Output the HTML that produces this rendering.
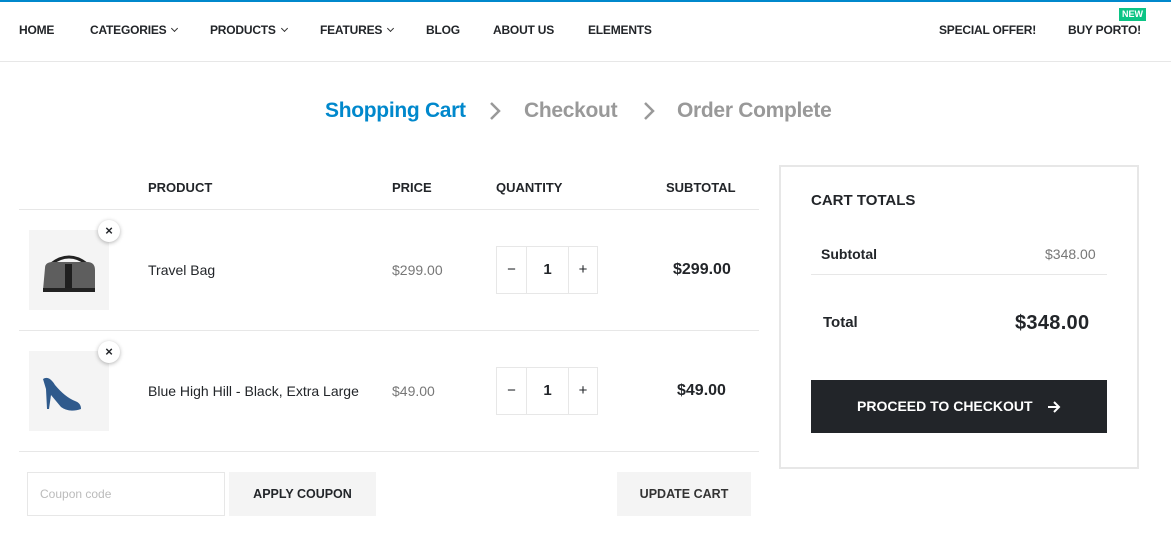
<!DOCTYPE html>
<html><head><meta charset="utf-8"><style>
*{margin:0;padding:0;box-sizing:border-box}
body{width:1171px;height:533px;overflow:hidden;background:#fff;font-family:"Liberation Sans",sans-serif;color:#222529;position:relative}
.a{position:absolute;white-space:nowrap}
.nav{font-size:12px;font-weight:bold;top:23px;color:#222529;letter-spacing:-0.2px}
.chev{display:inline-block;width:5px;height:5px;border-right:1px solid #333;border-bottom:1px solid #333;transform:rotate(45deg);margin-left:6px;position:relative;top:-3px}
.step{font-size:21px;font-weight:bold;top:99px;letter-spacing:-0.3px}
.hd{font-size:13px;font-weight:bold;top:180px}
.line{position:absolute;left:19px;width:740px;height:1px;background:#e7e7e7}
.img{position:absolute;left:29px;width:80px;height:80px;background:#f4f4f4}
.x{position:absolute;left:98px;width:22px;height:22px;border-radius:50%;background:#fff;box-shadow:0 1px 4px rgba(0,0,0,.3);font-size:13px;font-weight:bold;text-align:center;line-height:22px}
.qty{position:absolute;left:496px;width:102px;height:48px;border:1px solid #e7e7e7;display:flex}
.qty div{border-right:1px solid #e7e7e7;text-align:center;line-height:46px;font-size:15px}
.qty div:last-child{border-right:0}
.btn{position:absolute;background:#f4f4f4;font-size:12.5px;font-weight:bold;text-align:center;line-height:44px}
</style></head><body>
<div style="position:absolute;left:0;top:0;width:1171px;height:2px;background:#0088cc"></div>
<div style="position:absolute;left:0;top:61px;width:1171px;height:1px;background:#e7e7e7"></div>
<div class="a nav" style="left:19px">HOME</div>
<div class="a nav" style="left:90px">CATEGORIES<span class="chev"></span></div>
<div class="a nav" style="left:210px">PRODUCTS<span class="chev"></span></div>
<div class="a nav" style="left:320px">FEATURES<span class="chev"></span></div>
<div class="a nav" style="left:426px">BLOG</div>
<div class="a nav" style="left:493px">ABOUT US</div>
<div class="a nav" style="left:588px">ELEMENTS</div>
<div class="a nav" style="left:939px">SPECIAL OFFER!</div>
<div class="a nav" style="left:1068px">BUY PORTO!</div>
<div class="a" style="left:1119px;top:8px;background:#0cc485;color:#fff;font-size:9px;font-weight:bold;padding:1px 3px;line-height:11px">NEW</div>

<div class="a step" style="left:325px;color:#0088cc">Shopping Cart</div>
<svg class="a" style="left:489px;top:101px" width="12" height="20"><path d="M2 2 L10 10 L2 18" stroke="#999" stroke-width="2.5" fill="none"/></svg>
<div class="a step" style="left:524px;color:#999">Checkout</div>
<svg class="a" style="left:643px;top:101px" width="12" height="20"><path d="M2 2 L10 10 L2 18" stroke="#999" stroke-width="2.5" fill="none"/></svg>
<div class="a step" style="left:677px;color:#999">Order Complete</div>

<div class="a hd" style="left:148px">PRODUCT</div>
<div class="a hd" style="left:392px">PRICE</div>
<div class="a hd" style="left:496px">QUANTITY</div>
<div class="a hd" style="left:666px">SUBTOTAL</div>
<div class="line" style="top:209px"></div>
<div class="line" style="top:330px"></div>
<div class="line" style="top:451px"></div>

<div class="img" style="top:230px"><svg width="80" height="80"><path d="M22 34 Q40 20 58 34" stroke="#222" stroke-width="3" fill="none"/><path d="M16 38 Q16 32 24 32 L58 32 Q66 32 66 40 L66 60 L14 60 Z" fill="#5e5e5e"/><rect x="36" y="34" width="7" height="26" fill="#1f1f1f"/><rect x="14" y="58" width="52" height="4" fill="#222"/></svg></div>
<div class="x" style="top:220px">×</div>
<div class="a" style="left:148px;top:262px;font-size:14px">Travel Bag</div>
<div class="a" style="left:392px;top:262px;font-size:14px;color:#777">$299.00</div>
<div class="qty" style="top:246px"><div style="width:30px">−</div><div style="width:42px;font-weight:bold">1</div><div style="width:28px">+</div></div>
<div class="a" style="left:673px;top:261px;font-size:16px;font-weight:bold">$299.00</div>

<div class="img" style="top:351px"><svg width="80" height="80"><path d="M14 28 Q20 24 26 34 Q36 46 46 50 Q52 52 52 58 Q40 62 32 56 L22 44 L20 58 L18 58 L17 38 Z" fill="#2f5a8c"/></svg></div>
<div class="x" style="top:341px">×</div>
<div class="a" style="left:148px;top:383px;font-size:14px">Blue High Hill - Black, Extra Large</div>
<div class="a" style="left:392px;top:383px;font-size:14px;color:#777">$49.00</div>
<div class="qty" style="top:367px"><div style="width:30px">−</div><div style="width:42px;font-weight:bold">1</div><div style="width:28px">+</div></div>
<div class="a" style="left:677px;top:382px;font-size:16px;font-weight:bold">$49.00</div>

<div style="position:absolute;left:27px;top:472px;width:198px;height:44px;border:1px solid #e7e7e7;font-size:12px;color:#bbb;padding:14px 12px">Coupon code</div>
<div class="btn" style="left:229px;top:472px;width:147px;height:44px">APPLY COUPON</div>
<div class="btn" style="left:617px;top:472px;width:134px;height:44px;color:#333">UPDATE CART</div>

<div style="position:absolute;left:779px;top:165px;width:360px;height:304px;border:2px solid #e7e7e7"></div>
<div class="a" style="left:811px;top:192px;font-size:15px;font-weight:bold">CART TOTALS</div>
<div class="a" style="left:821px;top:246px;font-size:14px;font-weight:bold">Subtotal</div>
<div class="a" style="left:1045px;top:246px;font-size:14px;color:#777">$348.00</div>
<div style="position:absolute;left:811px;top:274px;width:296px;height:1px;background:#e7e7e7"></div>
<div class="a" style="left:823px;top:314px;font-size:15px;font-weight:bold">Total</div>
<div class="a" style="left:1015px;top:312px;font-size:20px;font-weight:bold;letter-spacing:0.3px">$348.00</div>
<div style="position:absolute;left:811px;top:380px;width:296px;height:53px;background:#222529;color:#fff;font-size:14px;font-weight:bold;line-height:53px;padding-left:46px">PROCEED TO CHECKOUT</div>
<svg class="a" style="left:1047px;top:400px" width="14" height="14"><path d="M1 7 H12 M7 2 L12 7 L7 12" stroke="#fff" stroke-width="2" fill="none"/></svg>
</body></html>
